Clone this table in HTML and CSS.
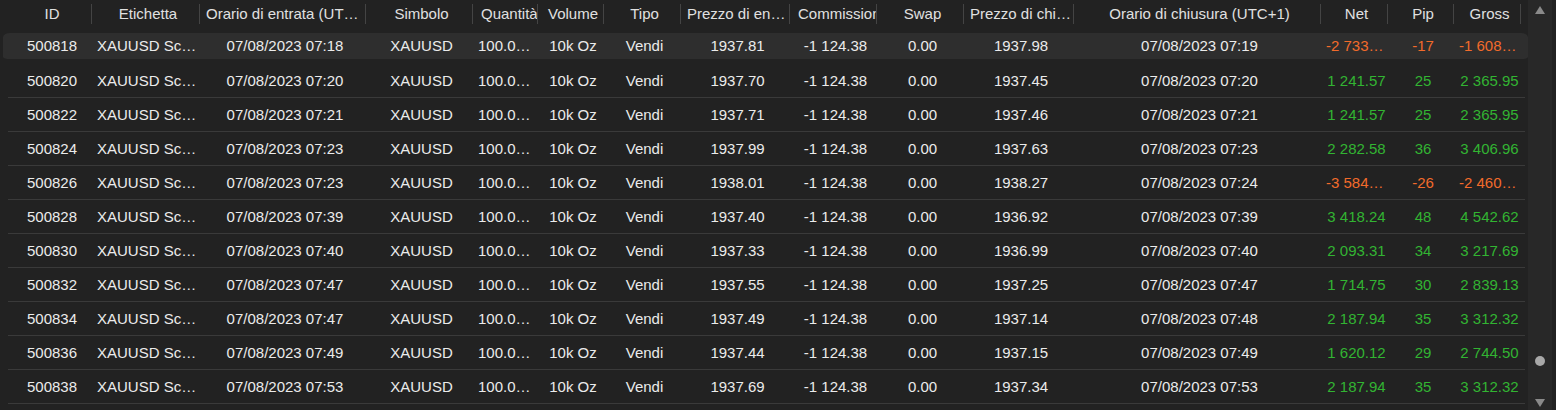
FILE: index.html
```html
<!DOCTYPE html>
<html lang="it">

<head>
    <meta charset="UTF-8">
    <meta name="viewport" content="width=device-width, initial-scale=1.0">
    <title>Storico</title>

    <link rel="stylesheet" href="styles.css">
</head>

<body>
    <div class="page">
        <div class="grid">
            <div class="head-row">
                <div class="hcell">ID</div>
                <div class="hcell">Etichetta</div>
                <div class="hcell">Orario di entrata (UTC+1)</div>
                <div class="hcell">Simbolo</div>
                <div class="hcell cut">Quantità</div>
                <div class="hcell">Volume</div>
                <div class="hcell">Tipo</div>
                <div class="hcell">Prezzo di entrata</div>
                <div class="hcell cut">Commissioni</div>
                <div class="hcell">Swap</div>
                <div class="hcell">Prezzo di chiusura</div>
                <div class="hcell">Orario di chiusura (UTC+1)</div>
                <div class="hcell">Net</div>
                <div class="hcell">Pip</div>
                <div class="hcell">Gross</div>
            </div>

            <div class="row selected">
                <div class="cell">500818</div><div class="cell">XAUUSD Scalper</div><div class="cell">07/08/2023 07:18</div><div class="cell">XAUUSD</div><div class="cell">100.00 Oz</div><div class="cell">10k Oz</div><div class="cell">Vendi</div><div class="cell">1937.81</div><div class="cell">-1 124.38</div><div class="cell">0.00</div><div class="cell">1937.98</div><div class="cell">07/08/2023 07:19</div><div class="cell loss">-2 733.26</div><div class="cell loss">-17</div><div class="cell loss">-1 608.88</div>
            </div>
            <div class="row">
                <div class="cell">500820</div><div class="cell">XAUUSD Scalper</div><div class="cell">07/08/2023 07:20</div><div class="cell">XAUUSD</div><div class="cell">100.00 Oz</div><div class="cell">10k Oz</div><div class="cell">Vendi</div><div class="cell">1937.70</div><div class="cell">-1 124.38</div><div class="cell">0.00</div><div class="cell">1937.45</div><div class="cell">07/08/2023 07:20</div><div class="cell gain">1 241.57</div><div class="cell gain">25</div><div class="cell gain">2 365.95</div>
            </div>
            <div class="row">
                <div class="cell">500822</div><div class="cell">XAUUSD Scalper</div><div class="cell">07/08/2023 07:21</div><div class="cell">XAUUSD</div><div class="cell">100.00 Oz</div><div class="cell">10k Oz</div><div class="cell">Vendi</div><div class="cell">1937.71</div><div class="cell">-1 124.38</div><div class="cell">0.00</div><div class="cell">1937.46</div><div class="cell">07/08/2023 07:21</div><div class="cell gain">1 241.57</div><div class="cell gain">25</div><div class="cell gain">2 365.95</div>
            </div>
            <div class="row">
                <div class="cell">500824</div><div class="cell">XAUUSD Scalper</div><div class="cell">07/08/2023 07:23</div><div class="cell">XAUUSD</div><div class="cell">100.00 Oz</div><div class="cell">10k Oz</div><div class="cell">Vendi</div><div class="cell">1937.99</div><div class="cell">-1 124.38</div><div class="cell">0.00</div><div class="cell">1937.63</div><div class="cell">07/08/2023 07:23</div><div class="cell gain">2 282.58</div><div class="cell gain">36</div><div class="cell gain">3 406.96</div>
            </div>
            <div class="row">
                <div class="cell">500826</div><div class="cell">XAUUSD Scalper</div><div class="cell">07/08/2023 07:23</div><div class="cell">XAUUSD</div><div class="cell">100.00 Oz</div><div class="cell">10k Oz</div><div class="cell">Vendi</div><div class="cell">1938.01</div><div class="cell">-1 124.38</div><div class="cell">0.00</div><div class="cell">1938.27</div><div class="cell">07/08/2023 07:24</div><div class="cell loss">-3 584.74</div><div class="cell loss">-26</div><div class="cell loss">-2 460.36</div>
            </div>
            <div class="row">
                <div class="cell">500828</div><div class="cell">XAUUSD Scalper</div><div class="cell">07/08/2023 07:39</div><div class="cell">XAUUSD</div><div class="cell">100.00 Oz</div><div class="cell">10k Oz</div><div class="cell">Vendi</div><div class="cell">1937.40</div><div class="cell">-1 124.38</div><div class="cell">0.00</div><div class="cell">1936.92</div><div class="cell">07/08/2023 07:39</div><div class="cell gain">3 418.24</div><div class="cell gain">48</div><div class="cell gain">4 542.62</div>
            </div>
            <div class="row">
                <div class="cell">500830</div><div class="cell">XAUUSD Scalper</div><div class="cell">07/08/2023 07:40</div><div class="cell">XAUUSD</div><div class="cell">100.00 Oz</div><div class="cell">10k Oz</div><div class="cell">Vendi</div><div class="cell">1937.33</div><div class="cell">-1 124.38</div><div class="cell">0.00</div><div class="cell">1936.99</div><div class="cell">07/08/2023 07:40</div><div class="cell gain">2 093.31</div><div class="cell gain">34</div><div class="cell gain">3 217.69</div>
            </div>
            <div class="row">
                <div class="cell">500832</div><div class="cell">XAUUSD Scalper</div><div class="cell">07/08/2023 07:47</div><div class="cell">XAUUSD</div><div class="cell">100.00 Oz</div><div class="cell">10k Oz</div><div class="cell">Vendi</div><div class="cell">1937.55</div><div class="cell">-1 124.38</div><div class="cell">0.00</div><div class="cell">1937.25</div><div class="cell">07/08/2023 07:47</div><div class="cell gain">1 714.75</div><div class="cell gain">30</div><div class="cell gain">2 839.13</div>
            </div>
            <div class="row">
                <div class="cell">500834</div><div class="cell">XAUUSD Scalper</div><div class="cell">07/08/2023 07:47</div><div class="cell">XAUUSD</div><div class="cell">100.00 Oz</div><div class="cell">10k Oz</div><div class="cell">Vendi</div><div class="cell">1937.49</div><div class="cell">-1 124.38</div><div class="cell">0.00</div><div class="cell">1937.14</div><div class="cell">07/08/2023 07:48</div><div class="cell gain">2 187.94</div><div class="cell gain">35</div><div class="cell gain">3 312.32</div>
            </div>
            <div class="row">
                <div class="cell">500836</div><div class="cell">XAUUSD Scalper</div><div class="cell">07/08/2023 07:49</div><div class="cell">XAUUSD</div><div class="cell">100.00 Oz</div><div class="cell">10k Oz</div><div class="cell">Vendi</div><div class="cell">1937.44</div><div class="cell">-1 124.38</div><div class="cell">0.00</div><div class="cell">1937.15</div><div class="cell">07/08/2023 07:49</div><div class="cell gain">1 620.12</div><div class="cell gain">29</div><div class="cell gain">2 744.50</div>
            </div>
            <div class="row">
                <div class="cell">500838</div><div class="cell">XAUUSD Scalper</div><div class="cell">07/08/2023 07:53</div><div class="cell">XAUUSD</div><div class="cell">100.00 Oz</div><div class="cell">10k Oz</div><div class="cell">Vendi</div><div class="cell">1937.69</div><div class="cell">-1 124.38</div><div class="cell">0.00</div><div class="cell">1937.34</div><div class="cell">07/08/2023 07:53</div><div class="cell gain">2 187.94</div><div class="cell gain">35</div><div class="cell gain">3 312.32</div>
            </div>
        </div>

        <div class="scrollbar">
            <div class="arrow-up"></div>
            <div class="track">
                <div class="thumb"></div>
            </div>
            <div class="arrow-down"></div>
        </div>
    </div>
</body>

</html>
```

FILE: styles.css
```css
* {
    box-sizing: border-box;
}

body {
    margin: 0;
    background-color: #222222;
    font-family: "Liberation Sans", Arial, sans-serif;
    font-size: 15px;
    color: #ebebeb;
    overflow: hidden;
}

.page {
    display: flex;
    height: 410px;
}

.grid {
    width: 1517px;
    margin-left: 8px;
}

.head-row,
.row {
    display: grid;
    grid-template-columns: 84px 108px 166px 107px 65px 66px 77px 109px 87px 87px 110px 247px 67px 66px 67px;
}

.head-row {
    height: 30px;
    padding-top: 4px;
}

.hcell {
    height: 20px;
    line-height: 20px;
    text-align: center;
    padding: 0 1px 0 6px;
    color: #e0e0e0;
    border-right: 1px solid #444444;
    white-space: nowrap;
    overflow: hidden;
    text-overflow: ellipsis;
}

.hcell.cut {
    text-overflow: clip;
    padding: 0 0 0 8px;
}

.hcell:first-child {
    padding: 0 0 0 5px;
}

.row {
    height: 34px;
    border-bottom: 1px solid #3a3a3a;
}

.row.selected {
    margin: 0 -3px 0 -5px;
    padding: 0 3px 0 5px;
    border-top: 3px solid transparent;
    border-bottom: 5px solid transparent;
    background-color: #2e2e2e;
    background-clip: padding-box;
    border-radius: 7px;
}

.cell {
    line-height: 33px;
    text-align: center;
    padding: 0 1px 0 5px;
    white-space: nowrap;
    overflow: hidden;
    text-overflow: ellipsis;
}

.row.selected .cell {
    line-height: 26px;
}

.cell.loss {
    color: #f26b2b;
}

.cell.gain {
    color: #32b432;
}

.scrollbar {
    width: 24px;
    margin-left: 3px;
    background-color: #282828;
    display: flex;
    flex-direction: column;
    align-items: center;
    padding: 6px 0 3px;
}

.arrow-up {
    width: 0;
    height: 0;
    border-left: 5px solid transparent;
    border-right: 5px solid transparent;
    border-bottom: 8px solid #8a8a8a;
}

.arrow-down {
    width: 0;
    height: 0;
    border-left: 5px solid transparent;
    border-right: 5px solid transparent;
    border-top: 8px solid #8a8a8a;
}

.track {
    flex: 1;
    display: flex;
    flex-direction: column;
    justify-content: flex-end;
    padding-bottom: 33px;
}

.thumb {
    width: 10px;
    height: 10px;
    border-radius: 50%;
    background-color: #a8a8a8;
}
```
